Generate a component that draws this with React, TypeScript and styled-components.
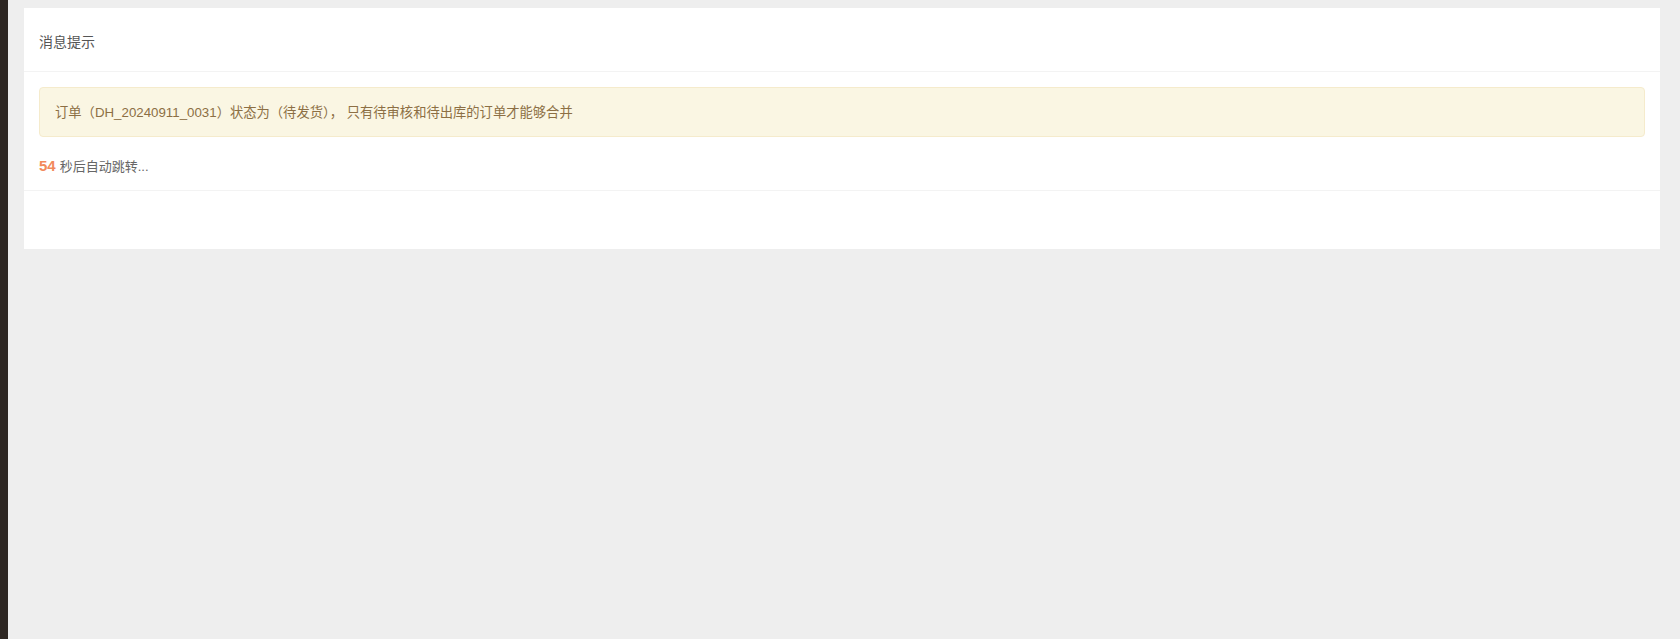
import React, { useEffect, useState } from "react";
import styled, { createGlobalStyle } from "styled-components";

const GlobalStyle = createGlobalStyle`
  html, body {
    margin: 0;
    padding: 0;
    height: 100%;
    background: #eeeeee;
    font-family: "Helvetica Neue", "Liberation Sans", "Noto Sans CJK SC", sans-serif;
  }
`;

const Page = styled.div`
  display: flex;
  min-height: 100vh;
`;

const SideStrip = styled.div`
  width: 8px;
  flex-shrink: 0;
  background: #2e2723;
`;

const Main = styled.main`
  flex: 1;
  padding: 8px 20px 0 16px;
  background: #eeeeee;
`;

const Panel = styled.section`
  background: #ffffff;
`;

const PanelHeader = styled.div`
  height: 64px;
  box-sizing: border-box;
  display: flex;
  align-items: center;
  padding: 2px 15px 0;
  border-bottom: 1px solid #f3f3f3;
`;

const Title = styled.h3`
  margin: 0;
  font-size: 14px;
  font-weight: normal;
  color: #555555;
`;

const PanelBody = styled.div`
  padding: 15px 15px 0;
  border-bottom: 1px solid #f3f3f3;
`;

const Alert = styled.div`
  height: 50px;
  box-sizing: border-box;
  display: flex;
  align-items: center;
  padding: 0 15px 2px;
  background: #faf6e3;
  border: 1px solid #f5ebcc;
  border-radius: 4px;
  font-size: 13.3px;
  color: #8c6f44;
  white-space: pre;
`;

const Countdown = styled.p`
  margin: 0;
  height: 53px;
  box-sizing: border-box;
  padding-top: 4px;
  display: flex;
  align-items: center;
  gap: 4px;
  font-size: 13px;
  color: #666666;
`;

const Seconds = styled.span`
  font-size: 15px;
  font-weight: bold;
  color: #f2895c;
`;

const PanelFooter = styled.div`
  height: 58px;
`;

export default function App() {
  const [left, setLeft] = useState(54);

  useEffect(() => {
    const t = setInterval(() => setLeft((s) => s), 1000);
    return () => clearInterval(t);
  }, []);

  return (
    <>
      <GlobalStyle />
      <Page>
        <SideStrip />
        <Main>
          <Panel>
            <PanelHeader>
              <Title>消息提示</Title>
            </PanelHeader>
            <PanelBody>
              <Alert>
                {"订单（DH_20240911_0031）状态为（待发货）， 只有待审核和待出库的订单才能够合并"}
              </Alert>
              <Countdown>
                <Seconds>{left}</Seconds>秒后自动跳转...
              </Countdown>
            </PanelBody>
            <PanelFooter />
          </Panel>
        </Main>
      </Page>
    </>
  );
}
